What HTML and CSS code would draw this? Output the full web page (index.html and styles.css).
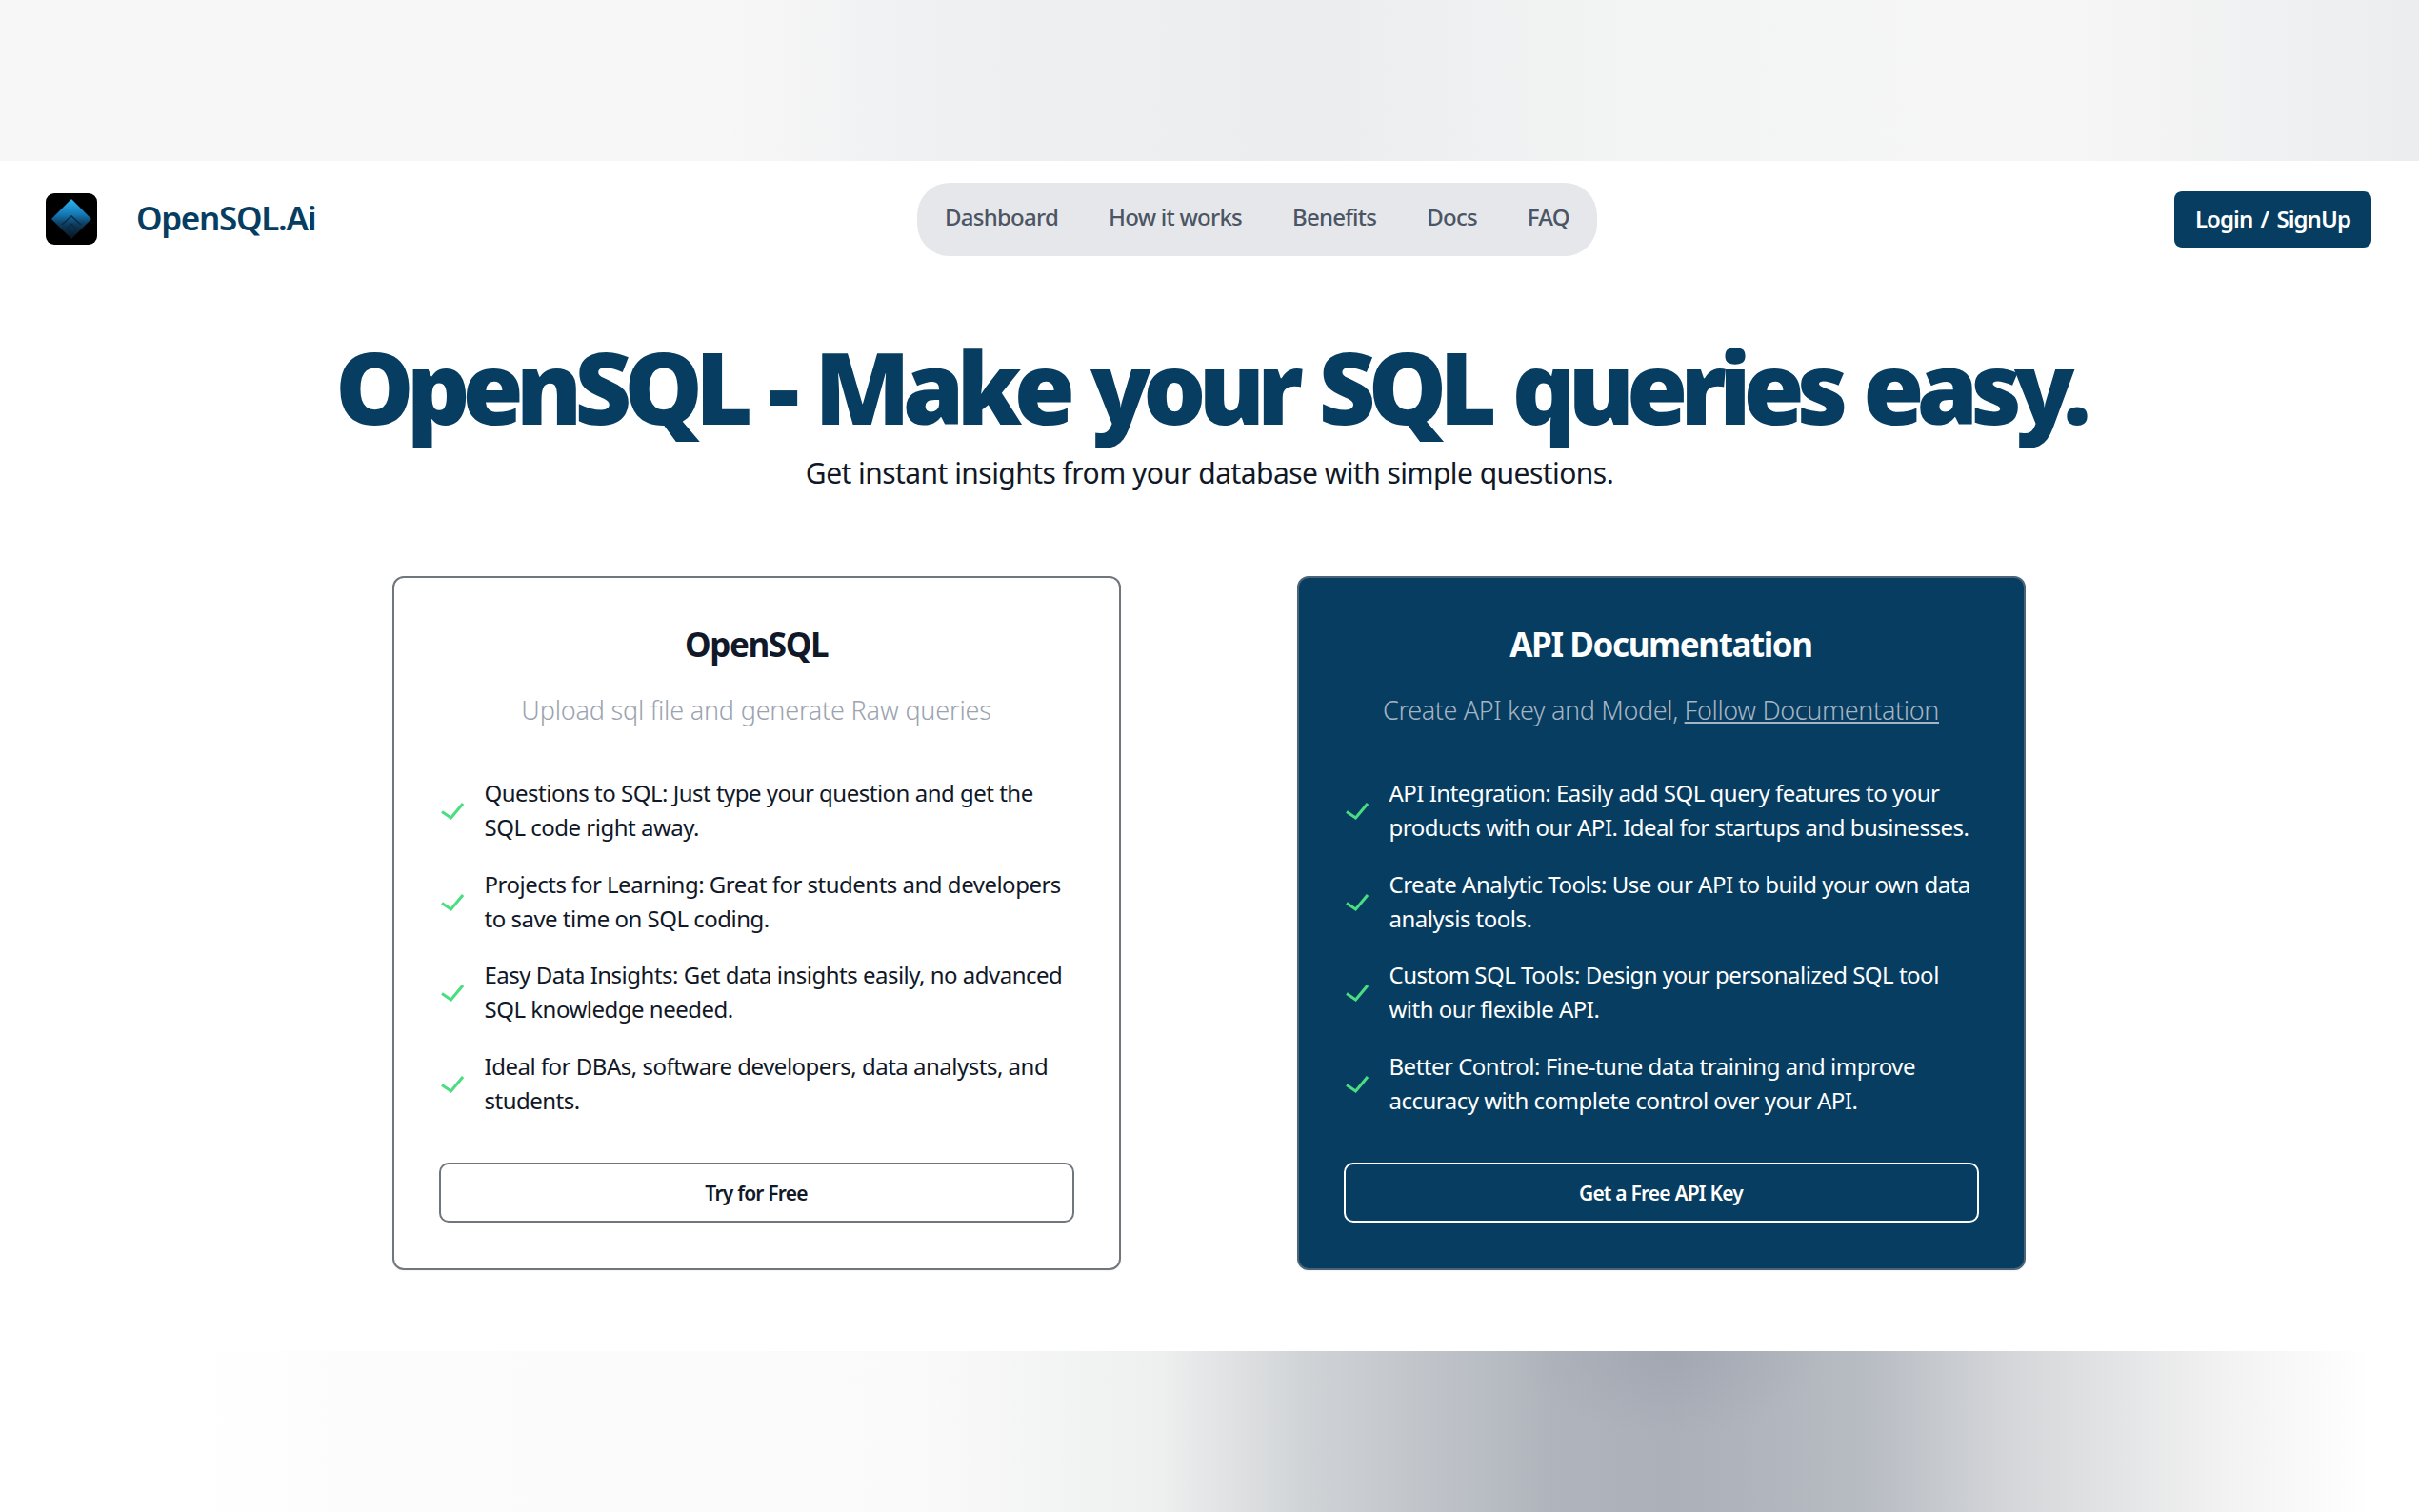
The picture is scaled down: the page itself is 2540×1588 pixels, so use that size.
FILE: index.html
```html
<!DOCTYPE html>
<html lang="en">
<head>
<meta charset="utf-8">
<title>OpenSQL.Ai</title>
<link rel="stylesheet" href="styles.css">
</head>
<body>
<div class="band band-top"></div>
<header class="nav">
  <a class="brand" href="#">
    <svg class="logo" viewBox="0 0 54 54" aria-hidden="true">
      <defs>
        <linearGradient id="dia" x1="0" y1="0" x2="0" y2="1">
          <stop offset="0" stop-color="#2db2ef"/>
          <stop offset=".38" stop-color="#1478b4"/>
          <stop offset=".62" stop-color="#0e3f62"/>
          <stop offset="1" stop-color="#081420"/>
        </linearGradient>
      </defs>
      <rect width="54" height="54" rx="9" fill="#000"/>
      <path d="M27 7 47 27 27 47 7 27Z" fill="url(#dia)" stroke="url(#dia)" stroke-width="1.5" stroke-linejoin="round"/>
      <path d="M17 33 27 24 37 33M21 38 27 32.500 33 38" fill="none" stroke="#0c2a44" stroke-width="1.600"/>
    </svg>
    <span class="brand-name">OpenSQL.Ai</span>
  </a>
  <nav class="pill">
    <a href="#">Dashboard</a>
    <a href="#">How it works</a>
    <a href="#">Benefits</a>
    <a href="#">Docs</a>
    <a href="#">FAQ</a>
  </nav>
  <a class="login" href="#">Login / SignUp</a>
</header>
<section class="hero">
  <h1>OpenSQL - Make your SQL queries easy.</h1>
  <p>Get instant insights from your database with simple questions.</p>
</section>
<main class="cards">
  <article class="card">
    <h2>OpenSQL</h2>
    <p class="sub">Upload sql file and generate Raw queries</p>
    <ul>
      <li><svg class="check" viewBox="0 0 26 26"><path d="M3 14.500 12.500 21 25 6"/></svg><span>Questions to SQL: Just type your question and get the SQL code right away.</span></li>
      <li><svg class="check" viewBox="0 0 26 26"><path d="M3 14.500 12.500 21 25 6"/></svg><span>Projects for Learning: Great for students and developers to save time on SQL coding.</span></li>
      <li><svg class="check" viewBox="0 0 26 26"><path d="M3 14.500 12.500 21 25 6"/></svg><span>Easy Data Insights: Get data insights easily, no advanced SQL knowledge needed.</span></li>
      <li><svg class="check" viewBox="0 0 26 26"><path d="M3 14.500 12.500 21 25 6"/></svg><span>Ideal for DBAs, software developers, data analysts, and students.</span></li>
    </ul>
    <a class="btn" href="#">Try for Free</a>
  </article>
  <article class="card dark">
    <h2>API Documentation</h2>
    <p class="sub">Create API key and Model, <a href="#">Follow Documentation</a></p>
    <ul>
      <li><svg class="check" viewBox="0 0 26 26"><path d="M3 14.500 12.500 21 25 6"/></svg><span>API Integration: Easily add SQL query features to your products with our API. Ideal for startups and businesses.</span></li>
      <li><svg class="check" viewBox="0 0 26 26"><path d="M3 14.500 12.500 21 25 6"/></svg><span>Create Analytic Tools: Use our API to build your own data analysis tools.</span></li>
      <li><svg class="check" viewBox="0 0 26 26"><path d="M3 14.500 12.500 21 25 6"/></svg><span>Custom SQL Tools: Design your personalized SQL tool with our flexible API.</span></li>
      <li><svg class="check" viewBox="0 0 26 26"><path d="M3 14.500 12.500 21 25 6"/></svg><span>Better Control: Fine-tune data training and improve accuracy with complete control over your API.</span></li>
    </ul>
    <a class="btn" href="#">Get a Free API Key</a>
  </article>
</main>
<div class="band band-bottom"></div>
</body>
</html>
```
FILE: styles.css
```css
* { box-sizing: border-box; }
html, body { margin: 0; padding: 0; }
body {
  width: 2540px;
  height: 1588px;
  overflow: hidden;
  background: #fff;
  font-family: "Noto Sans", "Open Sans", sans-serif;
  color: #111827;
  display: flex;
  flex-direction: column;
}
a { text-decoration: none; color: inherit; }

.band-top {
  flex: none;
  height: 169px;
  background: linear-gradient(90deg, #f7f7f7 0%, #f7f7f7 30%, #eff0f2 39%, #ecedee 55%, #f3f4f4 68%, #f6f6f6 85%, #ecedef 100%);
}
.band-bottom {
  flex: 1;
  margin-top: 85px;
  background:
    radial-gradient(ellipse 160px 90px at 69% 0, rgba(150,155,168,.45), rgba(150,155,168,0)),
    linear-gradient(90deg, #fff 8%, #fcfcfc 15%, #fafafa 38%, #eeefef 48%, #d0d3d6 54%, #b0b5bd 64%, #abb0b9 69%, #b7bbc2 77%, #d4d6d9 83%, #f2f2f2 92%, #fff 98%);
}

.nav {
  flex: none;
  height: 122px;
  padding: 0 50px 0 48px;
  display: flex;
  align-items: center;
}
.brand { display: flex; align-items: center; gap: 41px; width: 915px; }
.logo { width: 54px; height: 54px; flex: none; }
.brand-name { font-size: 35px; font-weight: 600; color: #063d61; letter-spacing: -1.3px; line-height: 44px; padding-bottom: 3px; }
.pill {
  height: 77px;
  border-radius: 34px;
  background: #e5e7eb;
  display: flex;
  align-items: center;
  gap: 53px;
  padding: 0 29px 6px 29px;
  font-size: 24px;
  font-weight: 500;
  color: #4b5563;
  letter-spacing: -.75px;
}
.login {
  margin-left: auto;
  width: 207px;
  height: 59px;
  border-radius: 8px;
  background: #063d61;
  color: #fff;
  font-size: 24px;
  font-weight: 600;
  letter-spacing: -.95px;
  word-spacing: 3px;
  display: flex;
  align-items: center;
  justify-content: center;
  padding-bottom: 2px;
}

.hero { flex: none; text-align: center; padding-top: 55px; }
.hero h1 {
  margin: 0;
  font-size: 104px;
  line-height: 120px;
  font-weight: 900;
  color: #063d61;
  letter-spacing: -8.1px;
  word-spacing: 5px;
  white-space: nowrap;
}
.hero p { margin: 9px 0 0; font-size: 30px; line-height: 44px; color: #111827; letter-spacing: -.55px; }

.cards {
  flex: none;
  display: flex;
  justify-content: center;
  gap: 185px;
  margin-top: 86px;
  padding-right: 2px;
}
.card {
  width: 765px;
  height: 729px;
  border: 2px solid #71757c;
  border-radius: 12px;
  padding: 46px 47px 48px;
  display: flex;
  flex-direction: column;
  box-shadow: 0 1px 2px rgba(0,0,0,.05);
}
.card h2 { margin: 0; text-align: center; font-size: 35px; line-height: 48px; font-weight: 700; letter-spacing: -1.4px; color: #111827; }
.sub { margin: 25px 0 0; text-align: center; font-size: 27px; line-height: 40px; font-weight: 300; color: #9ca3af; letter-spacing: -.2px; }
.card ul { list-style: none; margin: 49px 0 0; padding: 0; display: flex; flex-direction: column; gap: 23.5px; }
.card li { display: flex; align-items: center; gap: 22px; font-size: 24px; line-height: 36px; letter-spacing: -.5px; color: #111827; }
.check { width: 26px; height: 26px; flex: none; fill: none; stroke: #4ade80; stroke-width: 3; }
.btn {
  margin-top: auto;
  height: 63px;
  border: 2px solid #71757c;
  border-radius: 10px;
  display: flex;
  align-items: center;
  justify-content: center;
  font-size: 21px;
  font-weight: 600;
  letter-spacing: -.8px;
  color: #111827;
}
.dark { background: #063d61; color: #fff; border-color: #4b6478; }
.dark h2, .dark li { color: #fff; }
.dark .btn { color: #fff; border-color: #fff; }
.dark .sub { color: #a5b4c2; letter-spacing: -.37px; }
.dark .sub a { text-decoration: underline; }
```
